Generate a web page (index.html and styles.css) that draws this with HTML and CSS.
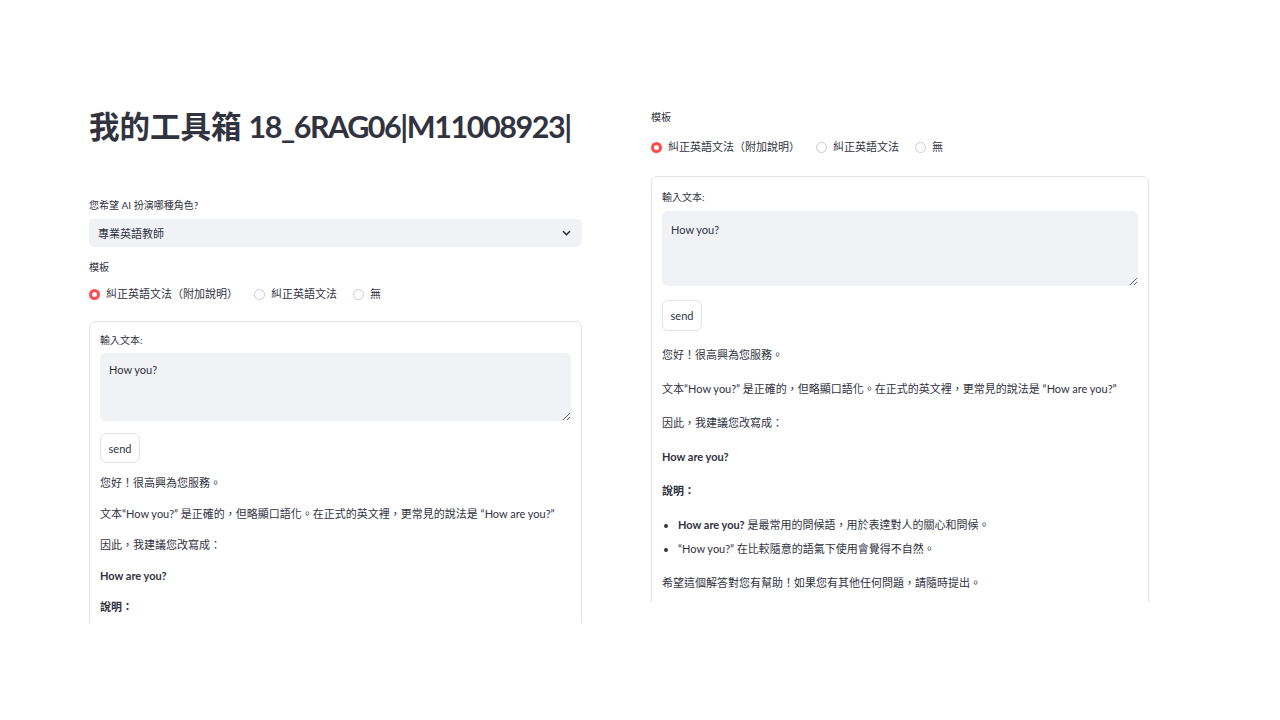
FILE: index.html
```html
<!DOCTYPE html>
<html lang="zh-Hant">
<head>
<meta charset="utf-8">
<title>我的工具箱</title>
<link rel="stylesheet" href="styles.css">
</head>
<body>
<div class="page">
  <section class="col col-left">
    <h1 class="title">我的工具箱 <span class="title-code">18_6RAG06|M11008923|</span></h1>
    <div class="label label-role">您希望 AI 扮演哪種角色?</div>
    <div class="select">
      <span>專業英語教師</span>
      <svg class="chev" width="9" height="6" viewBox="0 0 9 6"><path d="M1 1.2 L4.5 4.6 L8 1.2" fill="none" stroke="#31333f" stroke-width="1.6"/></svg>
    </div>
    <div class="label label-tpl">模板</div>
    <div class="radios">
      <span class="radio"><span class="dot on"></span>糾正英語文法（附加說明）</span>
      <span class="radio"><span class="dot"></span>糾正英語文法</span>
      <span class="radio"><span class="dot"></span>無</span>
    </div>
    <div class="clip clip-left">
      <div class="card">
        <div class="label in-label">輸入文本:</div>
        <textarea class="ta">How you?</textarea>
        <button class="btn">send</button>
        <div class="answer">
          <p>您好！很高興為您服務。</p>
          <p>文本“How you?” 是正確的，但略顯口語化。在正式的英文裡，更常見的說法是 “How are you?”</p>
          <p>因此，我建議您改寫成：</p>
          <p><b>How are you?</b></p>
          <p><b>說明：</b></p>
          <ul>
            <li><b>How are you?</b> 是最常用的問候語，用於表達對人的關心和問候。</li>
            <li>“How you?” 在比較隨意的語氣下使用會覺得不自然。</li>
          </ul>
          <p>希望這個解答對您有幫助！如果您有其他任何問題，請隨時提出。</p>
        </div>
      </div>
    </div>
  </section>
  <section class="col col-right">
    <div class="label label-tpl-r">模板</div>
    <div class="radios radios-r">
      <span class="radio"><span class="dot on"></span>糾正英語文法（附加說明）</span>
      <span class="radio"><span class="dot"></span>糾正英語文法</span>
      <span class="radio"><span class="dot"></span>無</span>
    </div>
    <div class="clip clip-right">
      <div class="card card-r">
        <div class="label in-label-r">輸入文本:</div>
        <textarea class="ta ta-r">How you?</textarea>
        <button class="btn btn-r">send</button>
        <div class="answer answer-r">
          <p>您好！很高興為您服務。</p>
          <p>文本“How you?” 是正確的，但略顯口語化。在正式的英文裡，更常見的說法是 “How are you?”</p>
          <p>因此，我建議您改寫成：</p>
          <p><b>How are you?</b></p>
          <p><b>說明：</b></p>
          <ul>
            <li><b>How are you?</b> 是最常用的問候語，用於表達對人的關心和問候。</li>
            <li>“How you?” 在比較隨意的語氣下使用會覺得不自然。</li>
          </ul>
          <p>希望這個解答對您有幫助！如果您有其他任何問題，請隨時提出。</p>
        </div>
      </div>
    </div>
  </section>
</div>
</body>
</html>
```
FILE: styles.css
```css
* { box-sizing: border-box; }
html, body { margin: 0; padding: 0; background: #ffffff; }
body {
  font-family: Lato, "Noto Sans CJK SC", sans-serif;
  color: #31333f;
  width: 1280px;
  height: 720px;
  overflow: hidden;
}
.page {
  display: flex;
  align-items: flex-start;
  gap: 69px;
  padding-left: 89px;
}
.col-left { width: 493px; padding-top: 105px; }
.col-right { width: 498px; padding-top: 110px; }

.title {
  margin: 0;
  font-family: "Noto Sans CJK SC", sans-serif;
  font-size: 30.5px;
  line-height: 40px;
  font-weight: 700;
  white-space: nowrap;
}
.title-code {
  font-family: Lato, "Noto Sans CJK SC", sans-serif;
  font-weight: 700;
  letter-spacing: -1.45px;
}
.label {
  font-size: 10px;
  line-height: 14px;
  color: #31333f;
}
.label-role { margin-top: 52px; }
.select {
  margin-top: 7px;
  height: 28px;
  background: #f0f2f6;
  border-radius: 5px;
  display: flex;
  align-items: center;
  justify-content: space-between;
  padding: 0 11px 0 9px;
  font-size: 11px;
}
.chev { display: block; }
.label-tpl { margin-top: 13px; }
.radios {
  margin-top: 11px;
  height: 18px;
  display: flex;
  align-items: center;
  gap: 16px;
  font-size: 11px;
  line-height: 18px;
}
.radio { display: flex; align-items: center; gap: 6px; white-space: nowrap; }
.dot {
  width: 11px;
  height: 11px;
  border-radius: 50%;
  border: 1px solid #c9cbd2;
  background: #fff;
  flex: none;
}
.dot.on {
  border: 3.5px solid #ff4b4b;
  background: #fff;
}

.clip { overflow: hidden; }
.clip-left { margin-top: 18px; height: 302px; }
.card {
  border: 1px solid #e2e3e8;
  border-radius: 6px;
  padding: 11px 10px 20px 10px;
  min-height: 700px;
}
.in-label { margin-bottom: 6px; }
.ta {
  display: block;
  width: 100%;
  height: 68px;
  border: none;
  outline: none;
  border-radius: 6px;
  background: #f0f2f6;
  font-family: Lato, "Noto Sans CJK SC", sans-serif;
  font-size: 11px;
  line-height: 18px;
  color: #31333f;
  padding: 8px 9px;
  resize: vertical;
  margin: 0;
}
.btn {
  display: block;
  margin-top: 12px;
  height: 30px;
  width: 40px;
  padding: 0;
  background: #fff;
  border: 1px solid #e2e3e8;
  border-radius: 6px;
  font-family: Lato, "Noto Sans CJK SC", sans-serif;
  font-size: 11px;
  color: #31333f;
}
.answer { margin-top: 11px; font-size: 11px; line-height: 18px; }
.answer p { margin: 0 0 13px 0; }
.answer b { font-weight: 700; }
.answer ul { margin: 0 0 13px 0; padding-left: 16px; }
.answer li { margin-bottom: 4px; }

/* right panel */
.radios-r { margin-top: 14px; gap: 16px; }
.clip-right { margin-top: 20px; height: 426px; }
.card-r { padding: 13px 10px 20px 10px; }
.in-label-r { margin-bottom: 7px; }
.ta-r { height: 75px; padding: 10px 9px; }
.btn-r { margin-top: 14px; height: 31px; }
.answer-r { margin-top: 14px; line-height: 20px; }
.answer-r p { margin-bottom: 14px; }
.answer-r ul { margin-bottom: 14px; }
.answer-r li { margin-bottom: 4px; }
```
